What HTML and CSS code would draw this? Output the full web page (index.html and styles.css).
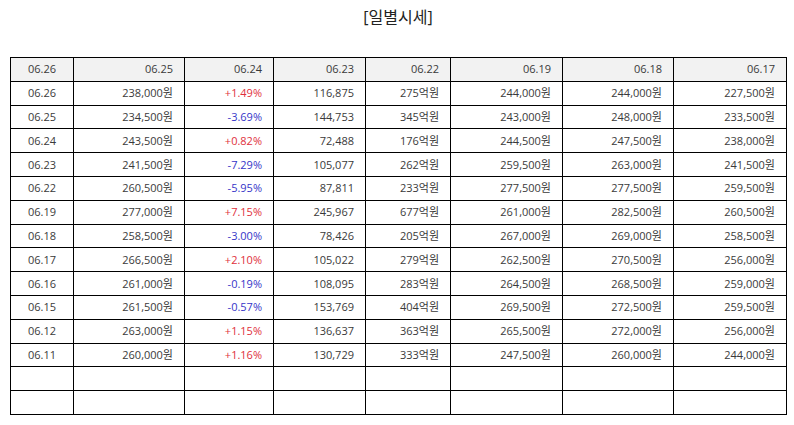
FILE: index.html
```html
<!DOCTYPE html>
<html lang="ko">
<head>
<meta charset="utf-8">
<title>일별시세</title>
<link rel="stylesheet" href="styles.css">
</head>
<body>
<div class="page">
  <h1 class="title">[일별시세]</h1>
  <table class="grid">
    <colgroup>
      <col class="c1"><col class="c2"><col class="c3"><col class="c4"><col class="c5"><col class="c6"><col class="c7"><col class="c8">
    </colgroup>
    <thead>
      <tr><th class="ctr">06.26</th><th>06.25</th><th>06.24</th><th>06.23</th><th>06.22</th><th>06.19</th><th>06.18</th><th>06.17</th></tr>
    </thead>
    <tbody>
      <tr><td class="ctr">06.26</td><td>238,000원</td><td class="up">+1.49%</td><td>116,875</td><td>275억원</td><td>244,000원</td><td>244,000원</td><td>227,500원</td></tr>
      <tr><td class="ctr">06.25</td><td>234,500원</td><td class="dn">-3.69%</td><td>144,753</td><td>345억원</td><td>243,000원</td><td>248,000원</td><td>233,500원</td></tr>
      <tr><td class="ctr">06.24</td><td>243,500원</td><td class="up">+0.82%</td><td>72,488</td><td>176억원</td><td>244,500원</td><td>247,500원</td><td>238,000원</td></tr>
      <tr><td class="ctr">06.23</td><td>241,500원</td><td class="dn">-7.29%</td><td>105,077</td><td>262억원</td><td>259,500원</td><td>263,000원</td><td>241,500원</td></tr>
      <tr><td class="ctr">06.22</td><td>260,500원</td><td class="dn">-5.95%</td><td>87,811</td><td>233억원</td><td>277,500원</td><td>277,500원</td><td>259,500원</td></tr>
      <tr><td class="ctr">06.19</td><td>277,000원</td><td class="up">+7.15%</td><td>245,967</td><td>677억원</td><td>261,000원</td><td>282,500원</td><td>260,500원</td></tr>
      <tr><td class="ctr">06.18</td><td>258,500원</td><td class="dn">-3.00%</td><td>78,426</td><td>205억원</td><td>267,000원</td><td>269,000원</td><td>258,500원</td></tr>
      <tr><td class="ctr">06.17</td><td>266,500원</td><td class="up">+2.10%</td><td>105,022</td><td>279억원</td><td>262,500원</td><td>270,500원</td><td>256,000원</td></tr>
      <tr><td class="ctr">06.16</td><td>261,000원</td><td class="dn">-0.19%</td><td>108,095</td><td>283억원</td><td>264,500원</td><td>268,500원</td><td>259,000원</td></tr>
      <tr><td class="ctr">06.15</td><td>261,500원</td><td class="dn">-0.57%</td><td>153,769</td><td>404억원</td><td>269,500원</td><td>272,500원</td><td>259,500원</td></tr>
      <tr><td class="ctr">06.12</td><td>263,000원</td><td class="up">+1.15%</td><td>136,637</td><td>363억원</td><td>265,500원</td><td>272,000원</td><td>256,000원</td></tr>
      <tr><td class="ctr">06.11</td><td>260,000원</td><td class="up">+1.16%</td><td>130,729</td><td>333억원</td><td>247,500원</td><td>260,000원</td><td>244,000원</td></tr>
      <tr><td class="ctr"></td><td></td><td></td><td></td><td></td><td></td><td></td><td></td></tr>
      <tr><td class="ctr"></td><td></td><td></td><td></td><td></td><td></td><td></td><td></td></tr>
    </tbody>
  </table>
</div>
</body>
</html>
```

FILE: styles.css
```css
html, body {
  margin: 0;
  padding: 0;
  background: #ffffff;
}

.page {
  padding: 6px 0 0 10px;
  font-family: "Open Sans", "Noto Sans CJK KR", sans-serif;
  color: #333333;
}

.title {
  margin: 0 0 28px 0;
  width: 776px;
  text-align: center;
  font-size: 16px;
  font-weight: normal;
  line-height: 23px;
  color: #222222;
}

.grid {
  border-collapse: collapse;
  table-layout: fixed;
  width: 776px;
  font-size: 11px;
}

.c1 { width: 63px; }
.c2 { width: 111px; }
.c3 { width: 89px; }
.c4 { width: 92px; }
.c5 { width: 85px; }
.c6 { width: 112px; }
.c7 { width: 111px; }
.c8 { width: 113px; }

.grid th,
.grid td {
  border: 1px solid #000000;
  height: 23.8px;
  padding: 0 11px 0 0;
  text-align: right;
  font-weight: normal;
  line-height: 14px;
  white-space: nowrap;
  box-sizing: border-box;
  color: #3a3a3a;
}

.grid th {
  background: #f2f2f2;
}

.grid .ctr {
  text-align: center;
  padding: 0;
}

.grid .up { color: #e0303c; }
.grid .dn { color: #3535c8; }
```
